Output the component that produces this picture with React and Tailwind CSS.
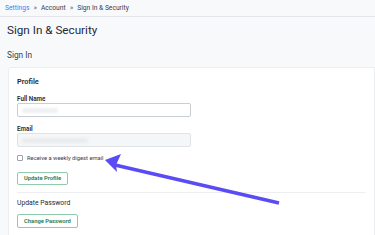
export default function App() {
  return (
    <div className="relative h-[235px] w-[375px] overflow-hidden bg-[#f8f9fb] font-['Roboto',sans-serif] text-[#1f2937]">
      <div className="flex h-[17px] items-center gap-[4px] border-b border-[#e3e5ea] px-[5px] text-[6.7px] text-[#374151]">
        <span className="text-[#3b82f6]">Settings</span>
        <span className="text-[7.5px] leading-none text-[#6b7280]">»</span>
        <span>Account</span>
        <span className="text-[7.5px] leading-none text-[#6b7280]">»</span>
        <span>Sign In &amp; Security</span>
      </div>
      <h1 className="pl-[7px] pt-[5px] text-[11.7px] leading-[16px] text-[#1f2937]">Sign In &amp; Security</h1>
      <div className="pl-[7px] pt-[11px] text-[8.3px] leading-[12px] text-[#374151]">Sign In</div>
      <div className="ml-[8px] mt-[6px] rounded-tl-[3px] border border-[#eceef2] bg-white pl-[8px] pr-[9px] pt-[9px]">
        <div className="text-[7.4px] font-semibold leading-[10px] text-[#1f2937]">Profile</div>
        <div className="mt-[8px] text-[6.3px] font-semibold leading-[8px] text-[#1f2937]">Full Name</div>
        <div className="flex h-[14px] w-[174px] items-center rounded-[2px] border border-[#c9cdd4] bg-white px-[4px]">
          <div className="h-[5px] w-[36px] rounded-sm bg-[#eef0f3] blur-[1px]" />
        </div>
        <div className="mt-[8px] text-[6.3px] font-semibold leading-[8px] text-[#1f2937]">Email</div>
        <div className="flex h-[14px] w-[174px] items-center rounded-[2px] border border-[#dfe2e6] bg-[#f5f6f7] px-[4px]">
          <div className="h-[5px] w-[66px] rounded-sm bg-[#e9ebee] blur-[1px]" />
        </div>
        <label className="mt-[6px] flex h-[10px] items-center gap-[4px] text-[5.8px] text-[#374151]">
          <span className="h-[6px] w-[6px] rounded-[1px] border border-[#9ca3af] bg-white" />
          Receive a weekly digest email
        </label>
        <button className="mt-[9px] flex h-[13px] items-center rounded-[2px] border border-[#8fcaab] bg-white px-[6px] text-[5.8px] font-semibold text-[#1f7a4d]">
          Update Profile
        </button>
        <div className="mt-[7px] border-t border-[#eceef2]" />
        <div className="mt-[5px] text-[6.8px] leading-[10px] text-[#1f2937]">Update Password</div>
        <button className="mt-[6px] flex h-[14px] items-center rounded-[2px] border border-[#8fcaab] bg-white px-[6px] text-[5.8px] font-semibold text-[#1f7a4d]">
          Change Password
        </button>
        <div className="h-[10px]" />
      </div>
      <svg className="pointer-events-none absolute left-0 top-0" width="375" height="235" viewBox="0 0 375 235">
        <line x1="279" y1="203" x2="115" y2="165" stroke="#5a4cf4" strokeWidth="3.5" />
        <polygon points="105,160 121,154 116,165 117,172" fill="#5a4cf4" />
      </svg>
    </div>
  );
}
